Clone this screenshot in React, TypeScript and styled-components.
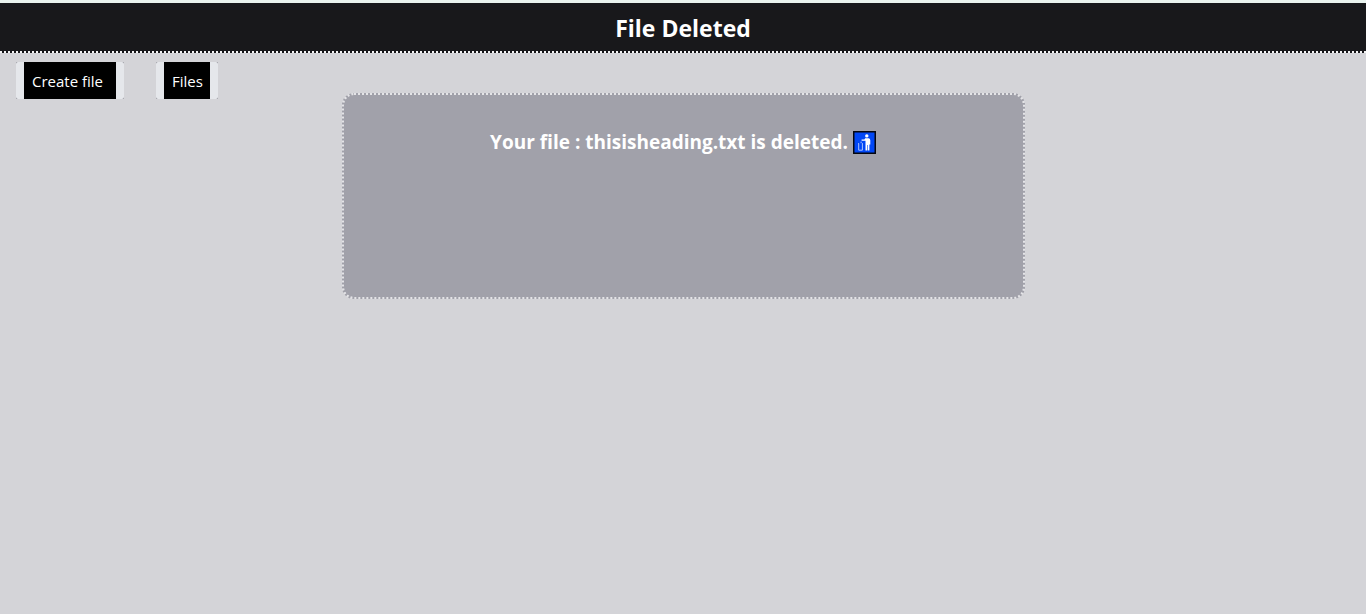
import React from "react";
import styled, { createGlobalStyle } from "styled-components";

const GlobalStyle = createGlobalStyle`
  *, *::before, *::after { box-sizing: border-box; }
  body {
    margin: 0;
    background: #d4d4d8;
    font-family: "Segoe UI", "Open Sans", "Noto Sans", sans-serif;
  }
`;

const Page = styled.div`
  border-top: 3px solid #e9f3ee;
`;

const Header = styled.header`
  background: #18181b;
  border-bottom: 2px dotted #f4f4f5;
  padding: 9px 0 7px;
  text-align: center;
`;

const Title = styled.h1`
  margin: 0;
  color: #fff;
  font-size: 23px;
  line-height: 32px;
  font-weight: 700;
`;

const Nav = styled.nav`
  display: flex;
  gap: 32px;
  padding: 9px 16px 0;
`;

const NavItem = styled.div`
  background: #8e8e96;
`;

const NavButton = styled.button<{ $width: number }>`
  display: block;
  border: 0;
  border-radius: 2px;
  background: #e5e7eb;
  padding: 0 8px;
  font: inherit;
  cursor: pointer;

  span {
    display: block;
    width: ${(p) => p.$width}px;
    padding: 7px 8px 6px;
    background: #000;
    color: #fff;
    font-size: 15px;
    line-height: 24px;
    text-align: left;
    white-space: nowrap;
  }
`;

const Card = styled.main`
  width: 50%;
  min-height: 206px;
  margin: -6px auto 0;
  padding: 33px 32px;
  border: 2px dotted #e4e4e7;
  border-radius: 12px;
  background: #a1a1aa;
`;

const Message = styled.h2`
  display: flex;
  justify-content: center;
  align-items: center;
  gap: 5px;
  margin: 0;
  color: #fff;
  font-size: 19px;
  line-height: 28px;
  font-weight: 700;
`;

const LitterIcon = () => (
  <svg width="23" height="23" viewBox="0 0 23 23" role="img" aria-label="Litter in bin">
    <rect width="23" height="23" fill="#05070f" />
    <rect x="1.5" y="1.5" width="20" height="20" fill="#0046f5" />
    <circle cx="13.8" cy="4.9" r="1.7" fill="#fff" />
    <path
      d="M12.2 7.3H15.6Q17.1 7.5 17.3 9.2V13.4H16.4V19.5H14.9V14H14.3V19.5H12.5V9.8H8.6V8.6H11.4Z"
      fill="#fff"
    />
    <path d="M5 12.5H5.7V19.2H9.4V12.5H10" fill="none" stroke="#bdd0ff" strokeWidth="0.9" />
    <path d="M8.1 10.6V12.2" stroke="#bdd0ff" strokeWidth="0.9" />
  </svg>
);

export default function App() {
  return (
    <>
      <GlobalStyle />
      <Page>
        <Header>
          <Title>File Deleted</Title>
        </Header>
        <Nav>
          <NavItem>
            <NavButton type="button" $width={92}>
              <span>Create file</span>
            </NavButton>
          </NavItem>
          <NavItem>
            <NavButton type="button" $width={46}>
              <span>Files</span>
            </NavButton>
          </NavItem>
        </Nav>
        <Card>
          <Message>
            Your file : thisisheading.txt is deleted.
            <LitterIcon />
          </Message>
        </Card>
      </Page>
    </>
  );
}
